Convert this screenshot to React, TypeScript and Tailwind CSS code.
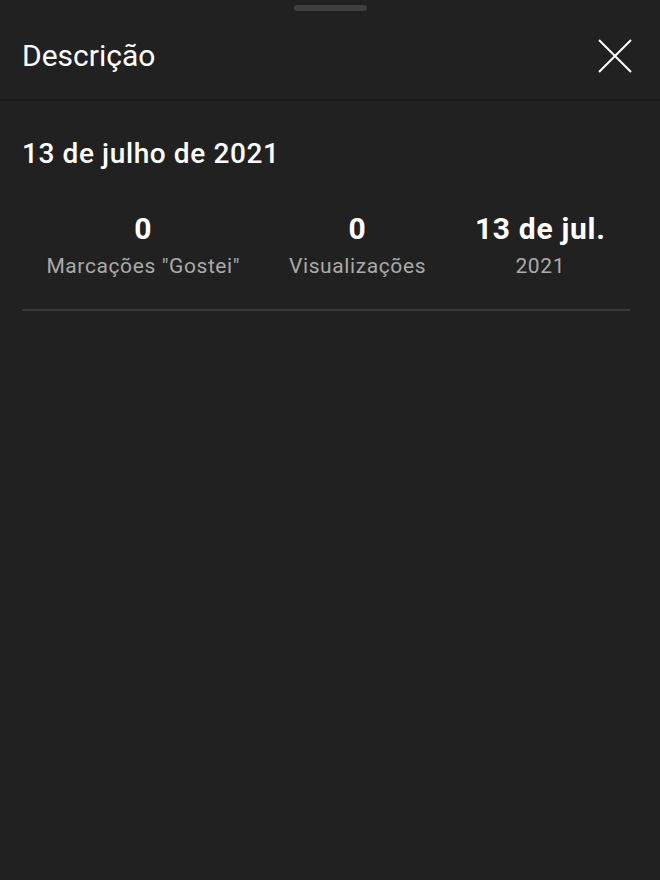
export default function App() {
  const stats = [
    { value: "0", label: 'Marcações "Gostei"' },
    { value: "0", label: "Visualizações" },
    { value: "13 de jul.", label: "2021" },
  ];

  return (
    <div
      className="w-[660px] h-[880px] bg-[#212121] text-white overflow-hidden flex flex-col"
      style={{ fontFamily: "Roboto, 'Liberation Sans', sans-serif" }}
    >
      <div className="flex justify-center pt-[5px]">
        <div className="w-[73px] h-[6px] rounded-full bg-[#3e3e3e]" />
      </div>
      <div className="flex items-center justify-between pl-[22px] pr-[27px] h-[90px] border-b-2 border-[#191919]">
        <h1 className="text-[30px] leading-none mt-[1px]">Descrição</h1>
        <button className="w-[36px] h-[36px] flex items-center justify-center mt-[1px]">
          <svg width="36" height="36" viewBox="0 0 36 36" fill="none" stroke="white" strokeWidth="2">
            <path d="M2 2 L34 34 M34 2 L2 34" />
          </svg>
        </button>
      </div>
      <div className="pl-[22px] pr-[30px]">
        <h2 className="text-[28px] font-medium leading-none tracking-[0.6px] mt-[39px]">13 de julho de 2021</h2>
        <div className="flex justify-around mt-[46px]">
          {stats.map((s) => (
            <div key={s.label} className="flex flex-col items-center">
              <span className="text-[30px] font-bold leading-none tracking-[0.7px]">{s.value}</span>
              <span className="text-[21px] text-[#aaaaaa] leading-none tracking-[0.6px] mt-[12px]">{s.label}</span>
            </div>
          ))}
        </div>
        <div className="h-[2px] bg-[#3a3a3a] mt-[32px]" />
      </div>
    </div>
  );
}
